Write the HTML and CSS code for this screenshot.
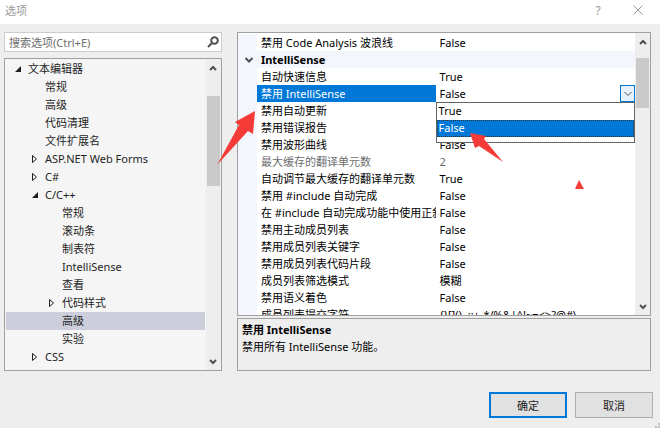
FILE: index.html
```html
<!DOCTYPE html>
<html lang="zh-CN">
<head>
	<meta charset="utf-8">
	<title>选项</title>
	<link rel="stylesheet" href="styles.css">
</head>
<body>
	<header class="titlebar">
		<h1>选项</h1>
		<button class="titlebtn" aria-label="帮助">?</button>
		<button class="titlebtn" aria-label="关闭">
			<svg width="10" height="10" viewBox="0 0 10 10"><path d="M0.5 0.5L9.5 9.5M9.5 0.5L0.5 9.5"/></svg>
		</button>
	</header>

	<main class="content">
		<div class="left">
			<div class="search">
				<input type="text" placeholder="搜索选项(Ctrl+E)" aria-label="搜索选项">
				<svg width="12" height="12" viewBox="0 0 12 12"><circle cx="7.5" cy="4.5" r="3.3"/><path d="M5 7L1 11"/></svg>
			</div>
			<div class="tree">
				<ul>
					<li><svg class="open" viewBox="0 0 8 10"><path d="M7 2V8H1Z"/></svg>文本编辑器</li>
					<li class="l2">常规</li>
					<li class="l2">高级</li>
					<li class="l2">代码清理</li>
					<li class="l2">文件扩展名</li>
					<li class="l2"><svg class="closed" viewBox="0 0 8 10"><path d="M1.5 1.5L5.5 5L1.5 8.5Z"/></svg>ASP.NET Web Forms</li>
					<li class="l2"><svg class="closed" viewBox="0 0 8 10"><path d="M1.5 1.5L5.5 5L1.5 8.5Z"/></svg>C#</li>
					<li class="l2"><svg class="open" viewBox="0 0 8 10"><path d="M7 2V8H1Z"/></svg>C/C++</li>
					<li class="l3">常规</li>
					<li class="l3">滚动条</li>
					<li class="l3">制表符</li>
					<li class="l3">IntelliSense</li>
					<li class="l3">查看</li>
					<li class="l3"><svg class="closed" viewBox="0 0 8 10"><path d="M1.5 1.5L5.5 5L1.5 8.5Z"/></svg>代码样式</li>
					<li class="l3 selected">高级</li>
					<li class="l3">实验</li>
					<li class="l2"><svg class="closed" viewBox="0 0 8 10"><path d="M1.5 1.5L5.5 5L1.5 8.5Z"/></svg>CSS</li>
				</ul>
				<div class="scrollbar">
					<svg width="8" height="6" viewBox="0 0 8 6"><path d="M1 5L4 2L7 5"/></svg>
					<div class="track"><div class="thumb tree-thumb"></div></div>
					<svg width="8" height="6" viewBox="0 0 8 6"><path d="M1 1L4 4L7 1"/></svg>
				</div>
			</div>
		</div>

		<div class="right">
			<div class="props">
				<div class="pane">
					<table>
						<tr><td class="gutter"></td><th>禁用 Code Analysis 波浪线</th><td>False</td></tr>
						<tr class="group"><td class="gutter"><svg width="8" height="6" viewBox="0 0 8 6"><path d="M0.5 1L4 4.5L7.5 1"/></svg></td><th colspan="2">IntelliSense</th></tr>
						<tr><td class="gutter"></td><th>自动快速信息</th><td>True</td></tr>
						<tr class="current">
							<td class="gutter"></td>
							<th><label for="value">禁用 IntelliSense</label></th>
							<td>
								<div class="editor">
									<input type="text" id="value" value="False">
									<button class="drop" aria-label="展开"><svg width="8" height="6" viewBox="0 0 8 6"><path d="M0.5 1L4 4.5L7.5 1"/></svg></button>
									<select class="choices" size="2" aria-label="禁用 IntelliSense">
										<option>True</option>
										<option selected>False</option>
									</select>
								</div>
							</td>
						</tr>
						<tr><td class="gutter"></td><th>禁用自动更新</th><td>False</td></tr>
						<tr><td class="gutter"></td><th>禁用错误报告</th><td>False</td></tr>
						<tr><td class="gutter"></td><th>禁用波形曲线</th><td>False</td></tr>
						<tr class="off"><td class="gutter"></td><th>最大缓存的翻译单元数</th><td>2</td></tr>
						<tr><td class="gutter"></td><th>自动调节最大缓存的翻译单元数</th><td>True</td></tr>
						<tr><td class="gutter"></td><th>禁用 #include 自动完成</th><td>False</td></tr>
						<tr><td class="gutter"></td><th>在 #include 自动完成功能中使用正斜杠</th><td>False</td></tr>
						<tr><td class="gutter"></td><th>禁用主动成员列表</th><td>False</td></tr>
						<tr><td class="gutter"></td><th>禁用成员列表关键字</th><td>False</td></tr>
						<tr><td class="gutter"></td><th>禁用成员列表代码片段</th><td>False</td></tr>
						<tr><td class="gutter"></td><th>成员列表筛选模式</th><td>模糊</td></tr>
						<tr><td class="gutter"></td><th>禁用语义着色</th><td>False</td></tr>
						<tr><td class="gutter"></td><th>成员列表提交字符</th><td>{}[]().,:;+-*/%&amp;|^!~=&lt;&gt;?@#\</td></tr>
					</table>
				</div>
				<div class="scrollbar">
					<svg width="8" height="6" viewBox="0 0 8 6"><path d="M1 5L4 2L7 5"/></svg>
					<div class="track"><div class="thumb props-thumb"></div></div>
					<svg width="8" height="6" viewBox="0 0 8 6"><path d="M1 1L4 4L7 1"/></svg>
				</div>
			</div>
			<div class="help">
				<h2>禁用 IntelliSense</h2>
				<p>禁用所有 IntelliSense 功能。</p>
			</div>
		</div>
	</main>

	<footer class="buttons">
		<button class="ok">确定</button>
		<button>取消</button>
	</footer>

	<svg class="grip" width="5" height="5" viewBox="0 0 5 5"><path d="M3 0H5V2H3ZM0 3H2V5H0ZM3 3H5V5H3Z"/></svg>

	<!-- red pointers over the dialog -->
	<svg class="marks" width="660" height="428" viewBox="0 0 660 428">
		<path d="M255 111L235 122L239 125L217 165L248 131L253 134Z"/>
		<path d="M470 133L475 148L479 146L503 162L484 139L486 136Z"/>
		<path d="M579 180L584 189H575Z"/>
	</svg>
</body>
</html>
```
FILE: styles.css
```css
* {
	box-sizing: border-box;
}
body {
	margin: 0;
	height: 100vh;
	display: flex;
	flex-direction: column;
	background: #eeeeee;
	color: #1e1e1e;
	font: 11px/17px "Noto Sans", "Noto Sans CJK SC", sans-serif;
	overflow: hidden;
}
button, input, select {
	font: inherit;
	color: inherit;
	margin: 0;
}
h1, h2, p, ul {
	margin: 0;
	padding: 0;
	font-size: 11px;
}
svg {
	fill: none;
	stroke: #505050;
}

.titlebar {
	display: flex;
	align-items: center;
	height: 24px;
	padding: 0 2px 4px 5px;
	background: #fff;
	color: #999;
}
.titlebar h1 {
	flex: 1;
	font-weight: normal;
}
.titlebtn {
	display: flex;
	align-items: center;
	justify-content: center;
	width: 40px;
	height: 20px;
	padding: 0;
	border: none;
	background: none;
	font-size: 12px;
}
.titlebtn svg {
	stroke: #999;
}

.content {
	flex: 1;
	min-height: 0;
	display: grid;
	grid-template-columns: 10fr 19fr;
	grid-template-rows: minmax(0, 1fr);
	gap: 15px;
	padding: 8px 9px 0 4px;
}
.left {
	min-width: 0;
	display: flex;
	flex-direction: column;
	gap: 6px;
}
.search {
	display: flex;
	align-items: center;
	height: 20px;
	padding-right: 2px;
	border: 1px solid #ccc;
	background: #fff;
}
.search input {
	flex: 1;
	min-width: 0;
	padding: 0 4px;
	border: none;
	outline: none;
	background: none;
}
.search input::placeholder {
	color: #6d6d6d;
}
.search svg {
	stroke-width: 2;
}
.tree {
	flex: 1;
	min-height: 0;
	display: flex;
	border: 1px solid #a0a0a0;
	background: #f5f5f5;
}
.tree ul {
	flex: 1;
	list-style: none;
	padding: 1px;
}
.tree li {
	height: 18px;
	line-height: 18px;
	padding-left: 22px;
}
.tree li.l2 {
	padding-left: 39px;
}
.tree li.l3 {
	padding-left: 56px;
}
.tree li.selected {
	background: #cccedb;
}
.open, .closed {
	width: 8px;
	height: 10px;
	margin-left: -14px;
	margin-right: 6px;
	vertical-align: -1px;
}
.open {
	fill: #1e1e1e;
	stroke: none;
}
.closed {
	stroke: #1e1e1e;
}

.scrollbar {
	flex: 0 0 15px;
	display: flex;
	flex-direction: column;
	align-items: center;
	padding: 6px 1px 5px;
	background: #eeeeee;
}
.scrollbar svg {
	stroke-width: 2;
}
.track {
	flex: 1;
	width: 100%;
}
.thumb {
	background: #cacaca;
}
.tree-thumb {
	height: 90px;
	margin-top: 25px;
}
.props-thumb {
	height: 50px;
	margin-top: 13px;
}

.right {
	min-width: 0;
	display: flex;
	flex-direction: column;
	gap: 2px;
}
.props {
	flex: 1;
	min-height: 0;
	display: flex;
	border: 1px solid #a0a0a0;
	background: #fff;
	color: #000;
}
.pane {
	flex: 1;
	min-width: 0;
	padding-top: 1px;
	overflow: hidden;
}
table {
	width: 100%;
	table-layout: fixed;
	border-collapse: collapse;
}
tr {
	height: 17px;
}
td, th {
	padding: 0 0 0 4px;
	font-weight: normal;
	text-align: left;
	white-space: nowrap;
	overflow: hidden;
}
tr:first-child th {
	width: 45%;
}
.gutter {
	width: 19px;
	background: #f3f6fc;
}
.gutter svg {
	display: block;
	margin: 0 auto;
	stroke-width: 2;
}
.group th {
	background: #f3f6fc;
	font-weight: bold;
}
.current th {
	background: #0078d7;
	color: #fff;
}
.current td {
	overflow: visible;
}
.off {
	color: #6d6d6d;
}
.editor {
	position: relative;
	display: flex;
	height: 17px;
}
.editor input {
	flex: 1;
	min-width: 0;
	padding: 0;
	border: none;
	outline: none;
}
.drop {
	display: flex;
	align-items: center;
	justify-content: center;
	width: 15px;
	padding: 0;
	border: 1px solid #0078d7;
	background: #e5f1fb;
}
.choices {
	position: absolute;
	top: 17px;
	left: -4px;
	right: 0;
	z-index: 1;
	height: 41px;
	border: 1px solid #646464;
	border-radius: 0;
	background: #fff;
	outline: none;
	overflow: hidden;
}
.choices option {
	height: 17px;
	min-height: 17px;
	padding: 0 2px;
	line-height: 17px;
	color: #000;
}
.choices option:checked {
	background: linear-gradient(#0078d7, #0078d7);
	color: #fff;
	outline: 1px dotted #333;
	outline-offset: -1px;
}
.help {
	height: 53px;
	padding: 2px 4px;
	border: 1px solid #a0a0a0;
	color: #000;
}

.buttons {
	display: flex;
	justify-content: flex-end;
	gap: 8px;
	padding: 21px 7px 10px;
}
.buttons button {
	width: 78px;
	height: 26px;
	padding: 0;
	border: 1px solid #adadad;
	background: #e1e1e1;
}
.buttons .ok {
	border: 2px solid #0078d7;
}
.grip {
	position: absolute;
	right: 0;
	bottom: 0;
	fill: #bfbfbf;
	stroke: none;
}

.marks {
	position: absolute;
	top: 0;
	left: 0;
	z-index: 2;
	pointer-events: none;
}
.marks path {
	fill: #f43b38;
	stroke: none;
}
```
